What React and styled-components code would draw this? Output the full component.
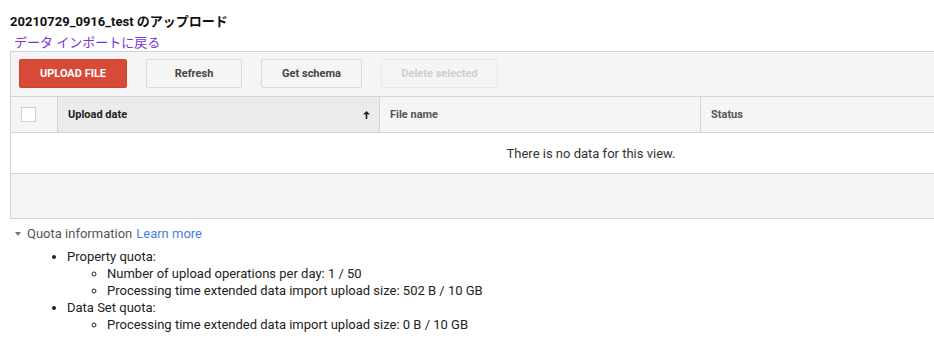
import React from 'react';
import styled, { createGlobalStyle } from 'styled-components';

const GlobalStyle = createGlobalStyle`
 body {
  margin: 0;
  background: #fff;
  font-family: Roboto, "Noto Sans CJK JP", Arial, sans-serif;
  overflow-x: hidden;
 }
`;

const Page = styled.div`
 padding: 14px 0 0 10px;
`;

const Title = styled.div`
 font-size: 13px;
 font-weight: bold;
 line-height: 16px;
 color: #111;
`;

const BackLink = styled.a`
 display: block;
 margin: 5px 0 0 4px;
 font-size: 13px;
 line-height: 16px;
 color: #7a35d8;
 text-decoration: none;
 cursor: pointer;
`;

const Panel = styled.div`
 width: 1160px;
 border: 1px solid #d4d4d4;
 border-right: none;
`;

const Toolbar = styled.div`
 display: flex;
 gap: 19px;
 padding: 7px 8px 8px 8px;
 background: #f5f5f5;
 border-bottom: 1px solid #d4d4d4;
`;

const Button = styled.button`
 box-sizing: border-box;
 height: 29px;
 width: ${p => p.$w}px;
 border-radius: 2px;
 font-family: Roboto, Arial, sans-serif;
 font-size: 11px;
 font-weight: bold;
 border: 1px solid ${p => (p.$primary ? '#c9432f' : p.disabled ? '#e8e8e8' : '#d9d9d9')};
 background: ${p => (p.$primary ? '#d84a38' : '#f5f5f5')};
 color: ${p => (p.$primary ? '#fff' : p.disabled ? '#cfcfcf' : '#444')};
 cursor: ${p => (p.disabled ? 'default' : 'pointer')};
`;

const HeaderRow = styled.div`
 display: grid;
 grid-template-columns: 46px 322px 321px 1fr;
 height: 35px;
 background: #f5f5f5;
 border-bottom: 1px solid #d4d4d4;
`;

const HeadCell = styled.div`
 display: flex;
 align-items: center;
 justify-content: space-between;
 padding: 0 9px 0 10px;
 font-size: 11px;
 font-weight: bold;
 color: ${p => (p.$sorted ? '#222' : '#555')};
 background: ${p => (p.$sorted ? '#ebebeb' : 'transparent')};
 border-left: ${p => (p.$first ? 'none' : '1px solid #d4d4d4')};
`;

const CheckBox = styled.span`
 width: 13px;
 height: 13px;
 border: 1px solid #cfcfcf;
 background: #fff;
`;

const EmptyRow = styled.div`
 display: flex;
 align-items: center;
 justify-content: center;
 height: 40px;
 background: #fff;
 font-size: 13px;
 color: #333;
 border-bottom: 1px solid #d4d4d4;
`;

const FooterRow = styled.div`
 height: 44px;
 background: #f5f5f5;
`;

const Quota = styled.div`
 margin-top: 6px;
 font-size: 13px;
 line-height: 17px;
`;

const QuotaHead = styled.div`
 display: flex;
 align-items: center;
 color: #555;
 padding-left: 5px;
`;

const Caret = styled.span`
 width: 0;
 height: 0;
 margin-right: 6px;
 border-left: 3.5px solid transparent;
 border-right: 3.5px solid transparent;
 border-top: 4px solid #777;
`;

const LearnMore = styled.a`
 margin-left: 4px;
 color: #4a7fe0;
 cursor: pointer;
`;

const List = styled.ul`
 margin: ${p => (p.$nested ? '0' : '6px 0 0 17px')};
 padding-left: 40px;
 list-style-type: ${p => (p.$nested ? 'circle' : 'disc')};
 color: #222;
`;

const quotas = [
 {
  name: 'Property quota:',
  items: [
   'Number of upload operations per day: 1 / 50',
   'Processing time extended data import upload size: 502 B / 10 GB'
  ]
 },
 {
  name: 'Data Set quota:',
  items: ['Processing time extended data import upload size: 0 B / 10 GB']
 }
];

const App = () => (
 <Page>
  <GlobalStyle />
  <Title>20210729_0916_test のアップロード</Title>
  <BackLink>データ インポートに戻る</BackLink>
  <Panel>
   <Toolbar>
    <Button $primary $w={108}>UPLOAD FILE</Button>
    <Button $w={96}>Refresh</Button>
    <Button $w={101}>Get schema</Button>
    <Button $w={117} disabled>Delete selected</Button>
   </Toolbar>
   <HeaderRow>
    <HeadCell $first>
     <CheckBox />
    </HeadCell>
    <HeadCell $sorted>
     Upload date
     <svg width="7" height="8" viewBox="0 0 7 8">
      <path d="M3.5 0 L7 3.5 L4.3 3.5 L4.3 8 L2.7 8 L2.7 3.5 L0 3.5 Z" fill="#222" />
     </svg>
    </HeadCell>
    <HeadCell>File name</HeadCell>
    <HeadCell>Status</HeadCell>
   </HeaderRow>
   <EmptyRow>There is no data for this view.</EmptyRow>
   <FooterRow />
  </Panel>
  <Quota>
   <QuotaHead>
    <Caret />
    Quota information<LearnMore>Learn more</LearnMore>
   </QuotaHead>
   <List>
    {quotas.map(q => (
     <li key={q.name}>
      {q.name}
      <List $nested>
       {q.items.map(item => (
        <li key={item}>{item}</li>
       ))}
      </List>
     </li>
    ))}
   </List>
  </Quota>
 </Page>
);

export default App;
